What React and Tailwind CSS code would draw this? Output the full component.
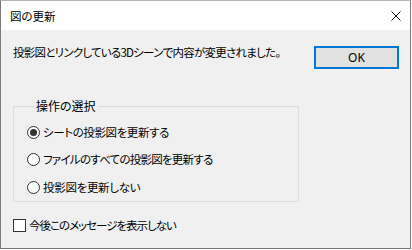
export default function App() {
  const font = "font-['Noto_Sans_CJK_JP','Noto_Sans',sans-serif] [font-feature-settings:'palt']";
  return (
    <div className="w-[412px] h-[250px] bg-white">
      <div className={`w-[411px] h-[249px] border border-[#7a7a7a] border-t-[#b5b5b5] bg-[#f0f0f0] flex flex-col text-black text-[11.5px] leading-[16px] tracking-[-0.3px] ${font}`}>
        <div className="h-[29px] bg-white flex items-center justify-between pl-[9px] pr-[9px]">
          <span className="text-[11.5px] leading-[16px] tracking-normal">図の更新</span>
          <svg width="10" height="10" viewBox="0 0 10 10">
            <path d="M0.5 0.5L9.5 9.5M9.5 0.5L0.5 9.5" stroke="#111" strokeWidth="1" fill="none" />
          </svg>
        </div>
        <div className="flex items-start justify-between pl-[12px] pr-[11px] mt-[14px]">
          <span className="tracking-[-0.75px]">投影図とリンクしている3Dシーンで内容が変更されました。</span>
          <button className="mt-[2px] w-[85px] h-[23px] bg-[#e1e1e1] border-2 border-[#0078d7] flex items-center justify-center text-[12px] tracking-normal font-['Noto_Sans',sans-serif]">
            OK
          </button>
        </div>
        <fieldset className="ml-[12px] mt-[29px] w-[286px] border border-[#dcdcdc] pl-[13px] pb-[6px] flex flex-col">
          <legend className="ml-[7px] px-[2px] leading-[16px] text-[12px] tracking-normal">操作の選択</legend>
          <div className="flex flex-col gap-[11px] mt-[10px]">
            <label className="flex items-center gap-[3px] h-[16px]">
              <span className="w-[13px] h-[13px] rounded-full border border-[#333] bg-white flex items-center justify-center">
                <span className="w-[7px] h-[7px] rounded-full bg-[#333]" />
              </span>
              <span className="tracking-[-0.4px]">シートの投影図を更新する</span>
            </label>
            <label className="flex items-center gap-[3px] h-[16px]">
              <span className="w-[13px] h-[13px] rounded-full border border-[#333] bg-white" />
              <span className="tracking-[-0.75px]">ファイルのすべての投影図を更新する</span>
            </label>
            <label className="flex items-center gap-[3px] h-[16px] mt-[1px]">
              <span className="w-[13px] h-[13px] rounded-full border border-[#333] bg-white" />
              <span>投影図を更新しない</span>
            </label>
          </div>
        </fieldset>
        <label className="flex items-center gap-[3px] h-[16px] ml-[12px] mt-[15px]">
          <span className="w-[13px] h-[13px] border border-[#333] bg-white" />
          <span className="tracking-[-1px]">今後このメッセージを表示しない</span>
        </label>
      </div>
    </div>
  );
}
